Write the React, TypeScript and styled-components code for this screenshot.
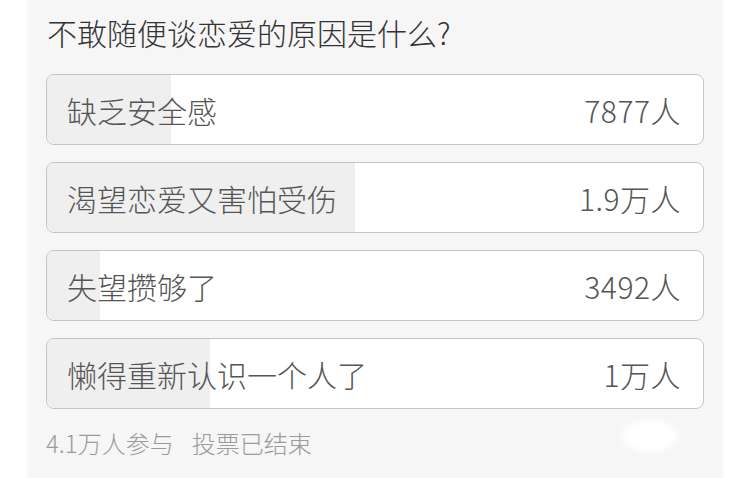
import React, { FC } from 'react'
import styled, { createGlobalStyle } from 'styled-components'

const options = [
  { label: '缺乏安全感', count: '7877人', share: 18.9 },
  { label: '渴望恋爱又害怕受伤', count: '1.9万人', share: 47 },
  { label: '失望攒够了', count: '3492人', share: 8.1 },
  { label: '懒得重新认识一个人了', count: '1万人', share: 24.9 },
]

const App: FC = () => {
  return (
    <Page>
      <GlobalStyles />
      <Panel>
        <Title>不敢随便谈恋爱的原因是什么?</Title>
        <OptionList>
          {options.map((o) => (
            <Option key={o.label}>
              <Fill style={{ width: `${o.share}%` }} />
              <Label>{o.label}</Label>
              <Count>{o.count}</Count>
            </Option>
          ))}
        </OptionList>
        <Footer>
          <span>4.1万人参与</span>
          <span>投票已结束</span>
        </Footer>
        <Smudge />
      </Panel>
    </Page>
  )
}

export default App

const GlobalStyles = createGlobalStyle`
  body {
    margin: 0;
    background: #fff;
    font-family: 'Noto Sans CJK SC', 'Noto Sans', sans-serif;
    font-weight: 300;
  }
`

const Page = styled.div`
  display: flex;
  width: 750px;
  height: 478px;
  background: #fff;
  overflow: hidden;
`

const Panel = styled.div`
  position: relative;
  margin-left: 27px;
  width: 696px;
  height: 478px;
  box-sizing: border-box;
  padding: 13px 19px 0;
  background: #f6f6f6;
  display: flex;
  flex-direction: column;
`

const Title = styled.div`
  font-size: 30px;
  line-height: 38px;
  color: #333;
  padding-left: 1px;
  margin-bottom: 23px;
`

const OptionList = styled.div`
  display: flex;
  flex-direction: column;
  gap: 17px;
`

const Option = styled.div`
  position: relative;
  height: 71px;
  box-sizing: border-box;
  border: 1px solid #c4c4c4;
  border-radius: 8px;
  background: #fff;
  overflow: hidden;
  display: flex;
  align-items: center;
  justify-content: space-between;
  padding: 0 22px 0 20px;
`

const Fill = styled.div`
  position: absolute;
  left: 0;
  top: 0;
  bottom: 0;
  background: #efefef;
`

const Label = styled.span`
  position: relative;
  font-size: 30px;
  color: #555;
`

const Count = styled.span`
  position: relative;
  font-size: 30px;
  color: #555;
  letter-spacing: 0.5px;
`

const Footer = styled.div`
  display: flex;
  gap: 18px;
  margin-top: 18px;
  font-size: 24px;
  line-height: 32px;
  color: #9a9a9a;
`

const Smudge = styled.div`
  position: absolute;
  left: 595px;
  top: 420px;
  width: 56px;
  height: 32px;
  border-radius: 50%;
  background: #fff;
  filter: blur(3px);
`
